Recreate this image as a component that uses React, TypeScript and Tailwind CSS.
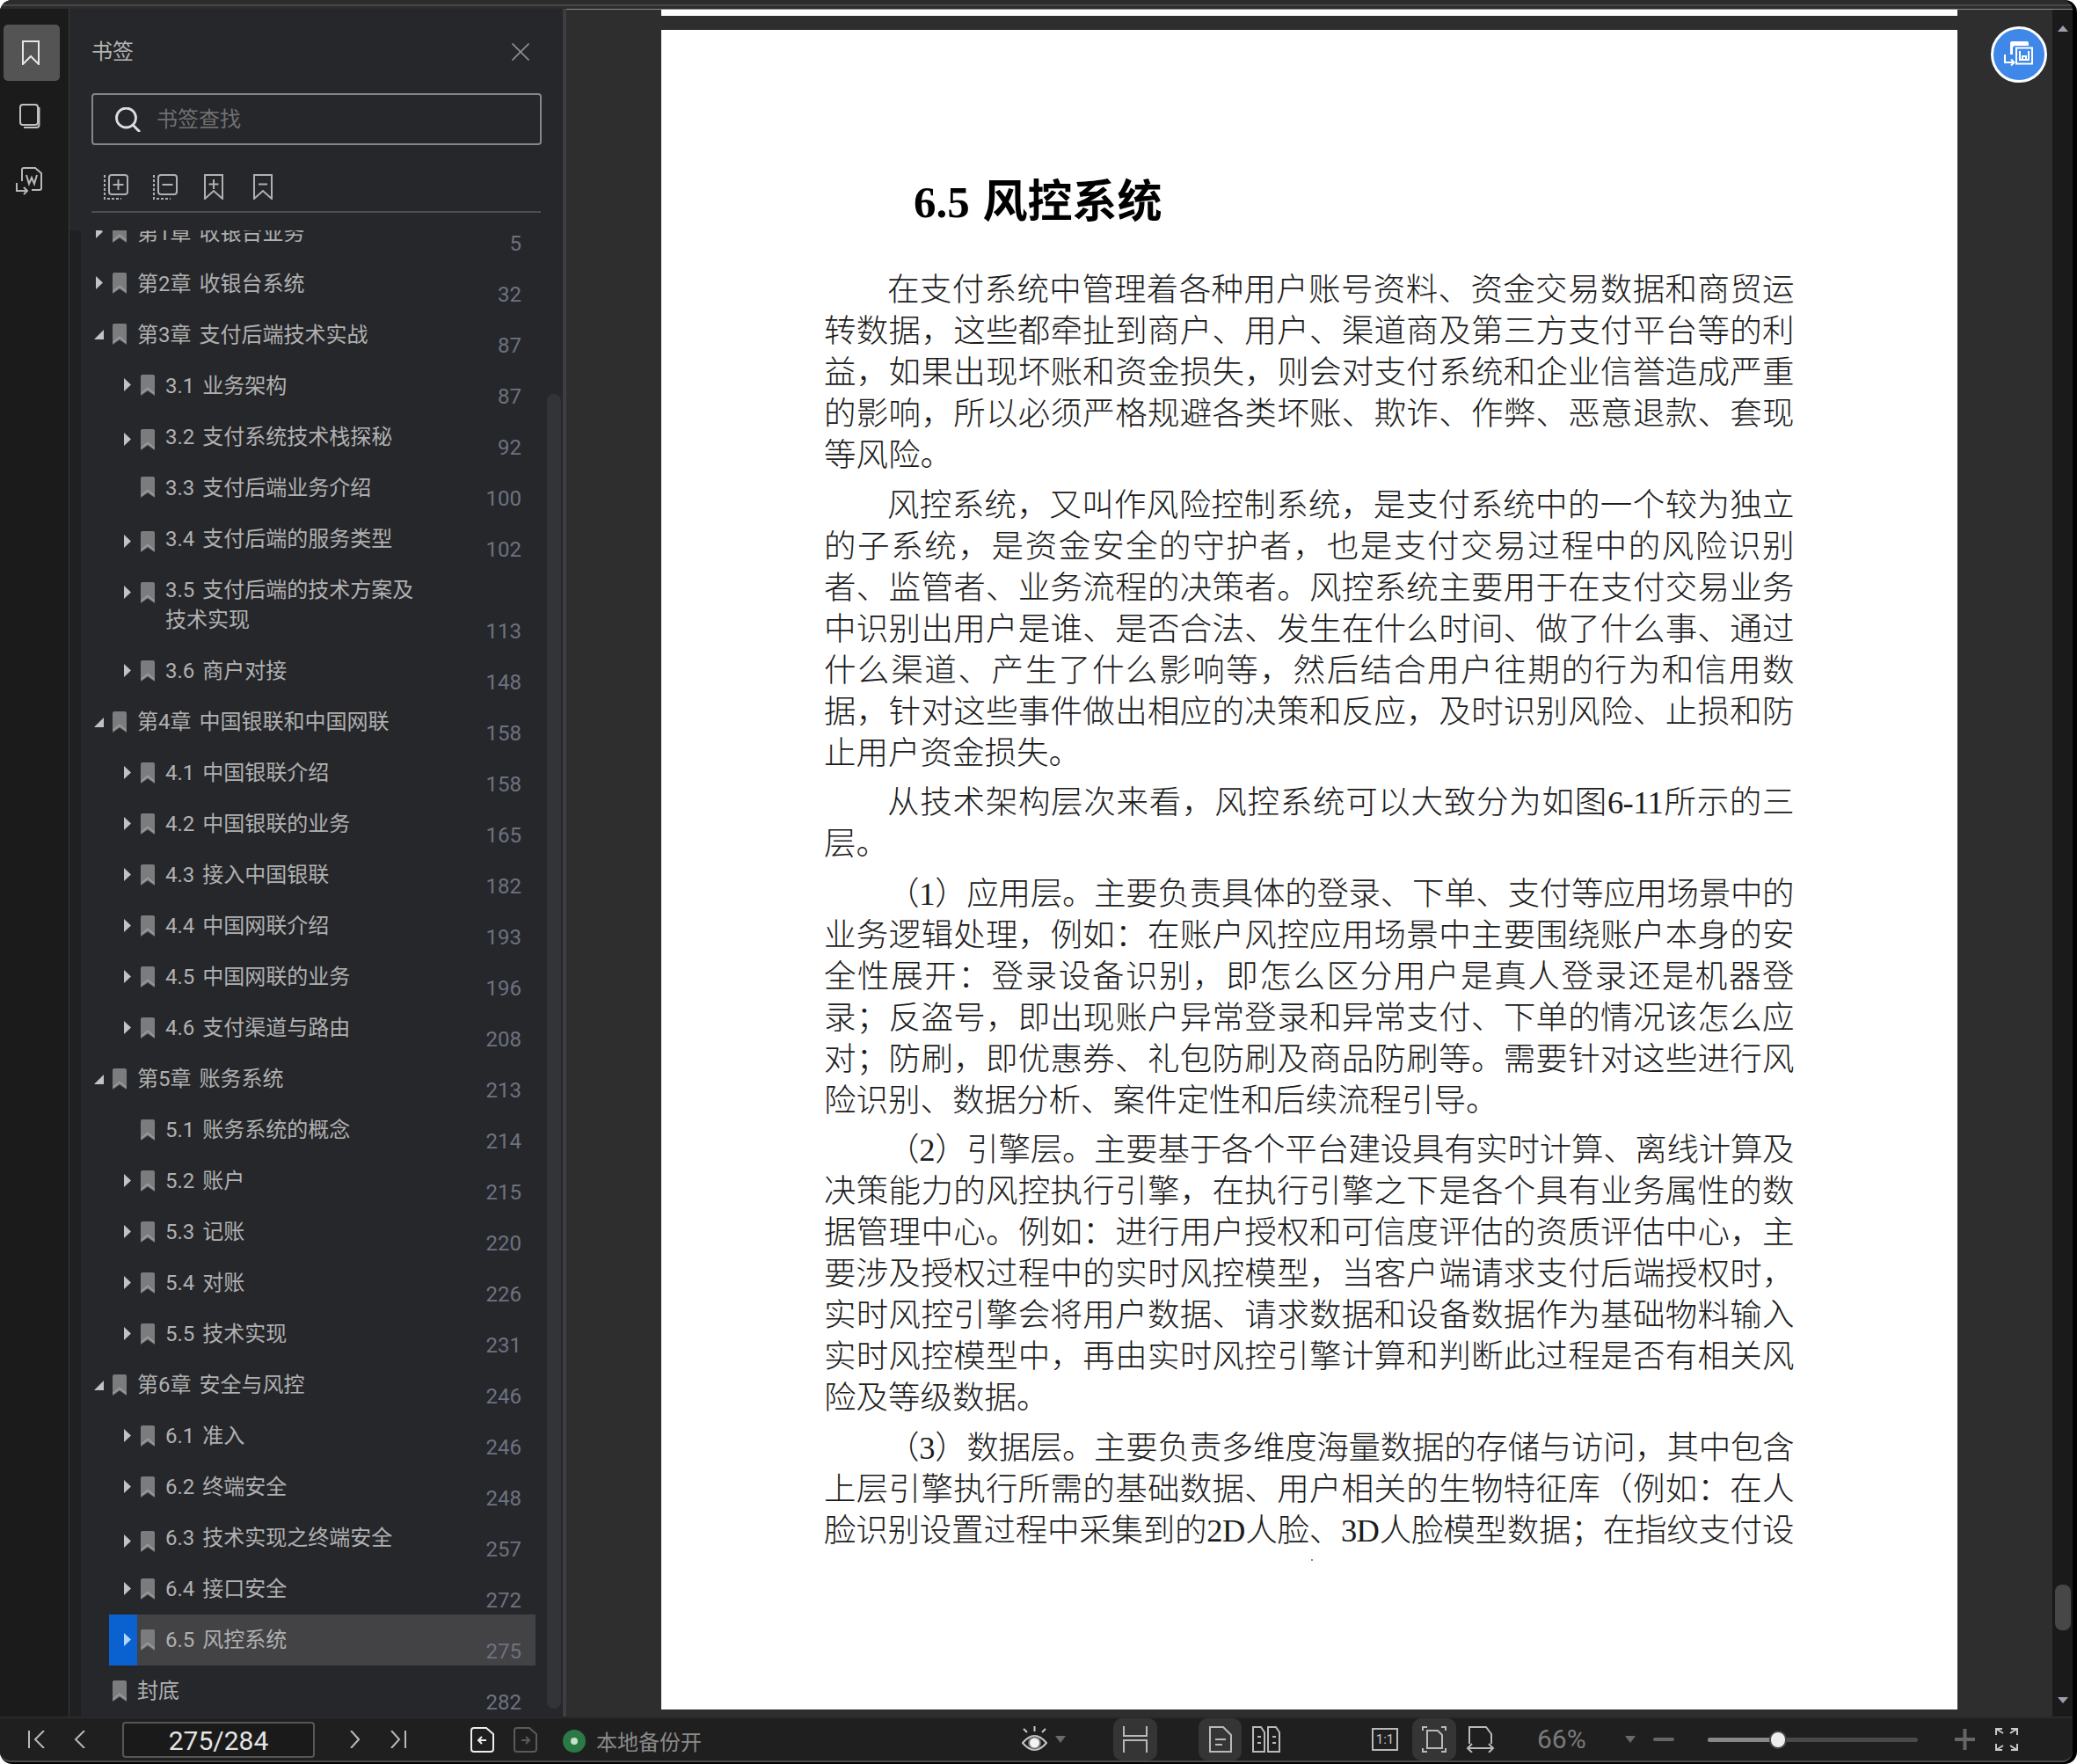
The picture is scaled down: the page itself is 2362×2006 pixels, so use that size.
import React from 'react';

type Row = { lines: string[]; page: number; level: 0 | 1; arrow: 'right' | 'down' | 'none'; selected?: boolean; low?: boolean };

const rows: Row[] = [
  { lines: ['第1章 收银台业务'], page: 5, level: 0, arrow: 'right' },
  { lines: ['第2章 收银台系统'], page: 32, level: 0, arrow: 'right' },
  { lines: ['第3章 支付后端技术实战'], page: 87, level: 0, arrow: 'down' },
  { lines: ['3.1 业务架构'], page: 87, level: 1, arrow: 'right' },
  { lines: ['3.2 支付系统技术栈探秘'], page: 92, level: 1, arrow: 'right', low: true },
  { lines: ['3.3 支付后端业务介绍'], page: 100, level: 1, arrow: 'none' },
  { lines: ['3.4 支付后端的服务类型'], page: 102, level: 1, arrow: 'right', low: true },
  { lines: ['3.5 支付后端的技术方案及', '技术实现'], page: 113, level: 1, arrow: 'right', low: true },
  { lines: ['3.6 商户对接'], page: 148, level: 1, arrow: 'right' },
  { lines: ['第4章 中国银联和中国网联'], page: 158, level: 0, arrow: 'down' },
  { lines: ['4.1 中国银联介绍'], page: 158, level: 1, arrow: 'right' },
  { lines: ['4.2 中国银联的业务'], page: 165, level: 1, arrow: 'right' },
  { lines: ['4.3 接入中国银联'], page: 182, level: 1, arrow: 'right' },
  { lines: ['4.4 中国网联介绍'], page: 193, level: 1, arrow: 'right' },
  { lines: ['4.5 中国网联的业务'], page: 196, level: 1, arrow: 'right' },
  { lines: ['4.6 支付渠道与路由'], page: 208, level: 1, arrow: 'right' },
  { lines: ['第5章 账务系统'], page: 213, level: 0, arrow: 'down' },
  { lines: ['5.1 账务系统的概念'], page: 214, level: 1, arrow: 'none' },
  { lines: ['5.2 账户'], page: 215, level: 1, arrow: 'right' },
  { lines: ['5.3 记账'], page: 220, level: 1, arrow: 'right' },
  { lines: ['5.4 对账'], page: 226, level: 1, arrow: 'right' },
  { lines: ['5.5 技术实现'], page: 231, level: 1, arrow: 'right' },
  { lines: ['第6章 安全与风控'], page: 246, level: 0, arrow: 'down' },
  { lines: ['6.1 准入'], page: 246, level: 1, arrow: 'right' },
  { lines: ['6.2 终端安全'], page: 248, level: 1, arrow: 'right' },
  { lines: ['6.3 技术实现之终端安全'], page: 257, level: 1, arrow: 'right', low: true },
  { lines: ['6.4 接口安全'], page: 272, level: 1, arrow: 'right' },
  { lines: ['6.5 风控系统'], page: 275, level: 1, arrow: 'right', selected: true },
  { lines: ['封底'], page: 282, level: 0, arrow: 'none' },
];

const paragraphs: string[][] = [
  [
    '在支付系统中管理着各种用户账号资料、资金交易数据和商贸运',
    '转数据，这些都牵扯到商户、用户、渠道商及第三方支付平台等的利',
    '益，如果出现坏账和资金损失，则会对支付系统和企业信誉造成严重',
    '的影响，所以必须严格规避各类坏账、欺诈、作弊、恶意退款、套现',
    '等风险。',
  ],
  [
    '风控系统，又叫作风险控制系统，是支付系统中的一个较为独立',
    '的子系统，是资金安全的守护者，也是支付交易过程中的风险识别',
    '者、监管者、业务流程的决策者。风控系统主要用于在支付交易业务',
    '中识别出用户是谁、是否合法、发生在什么时间、做了什么事、通过',
    '什么渠道、产生了什么影响等，然后结合用户往期的行为和信用数',
    '据，针对这些事件做出相应的决策和反应，及时识别风险、止损和防',
    '止用户资金损失。',
  ],
  ['从技术架构层次来看，风控系统可以大致分为如图6-11所示的三', '层。'],
  [
    '（1）应用层。主要负责具体的登录、下单、支付等应用场景中的',
    '业务逻辑处理，例如：在账户风控应用场景中主要围绕账户本身的安',
    '全性展开：登录设备识别，即怎么区分用户是真人登录还是机器登',
    '录；反盗号，即出现账户异常登录和异常支付、下单的情况该怎么应',
    '对；防刷，即优惠券、礼包防刷及商品防刷等。需要针对这些进行风',
    '险识别、数据分析、案件定性和后续流程引导。',
  ],
  [
    '（2）引擎层。主要基于各个平台建设具有实时计算、离线计算及',
    '决策能力的风控执行引擎，在执行引擎之下是各个具有业务属性的数',
    '据管理中心。例如：进行用户授权和可信度评估的资质评估中心，主',
    '要涉及授权过程中的实时风控模型，当客户端请求支付后端授权时，',
    '实时风控引擎会将用户数据、请求数据和设备数据作为基础物料输入',
    '实时风控模型中，再由实时风控引擎计算和判断此过程是否有相关风',
    '险及等级数据。',
  ],
  [
    '（3）数据层。主要负责多维度海量数据的存储与访问，其中包含',
    '上层引擎执行所需的基础数据、用户相关的生物特征库（例如：在人',
    '脸识别设置过程中采集到的2D人脸、3D人脸模型数据；在指纹支付设',
  ],
];

const Ic = ({ w, h, vb, children, className }: { w: string; h: string; vb: string; children: React.ReactNode; className?: string }) => (
  <svg viewBox={vb} fill="none" stroke="currentColor" className={`${w} ${h} shrink-0 ${className ?? ''}`}>
    {children}
  </svg>
);

const ListBookmark = ({ low }: { low?: boolean }) => (
  <svg viewBox="0 0 16 24" className={`ml-[4px] h-[24px] w-[16px] shrink-0 ${low ? 'mt-[21px]' : 'mt-[17px]'}`}>
    <path d="M0 2q0-2 2-2h12q2 0 2 2v22l-8-5.5-8 5.5z" fill="#7b7c7e" />
    <path d="M0.5 21.5l7.5-6 7.5 6" fill="none" stroke="#a0a0a0" strokeWidth="1.4" />
  </svg>
);

const RowArrow = ({ kind, selected }: { kind: Row['arrow']; selected?: boolean }) => {
  if (kind === 'right')
    return (
      <svg viewBox="0 0 8 15" className="h-[15px] w-[8px]">
        <path d="M0 0l8 7.5-8 7.5z" fill={selected ? '#b4d5fb' : '#c2c2c2'} />
      </svg>
    );
  if (kind === 'down')
    return (
      <svg viewBox="0 0 11 11" className="-ml-[2px] mt-[3px] h-[11px] w-[11px]">
        <path d="M0 11L11 0v11z" fill="#c2c2c2" />
      </svg>
    );
  return null;
};

const TocRow = ({ row }: { row: Row }) => (
  <div className={`flex ${row.level === 1 ? 'ml-[32px]' : ''} ${row.selected ? 'bg-[#434346]' : ''}`}>
    <div className={`w-[32px] shrink-0 pl-[17px] ${row.low ? 'pt-[25px]' : 'pt-[21px]'} ${row.selected ? 'bg-[#0a62d0]' : ''}`}>
      <RowArrow kind={row.arrow} selected={row.selected} />
    </div>
    <ListBookmark low={row.low} />
    <div className="ml-[12px] flex-1 pb-[10.75px] pt-[12.75px] text-[24px] leading-[34.5px] text-[#b0b0b0] [word-spacing:3px]">
      {row.lines.map((l) => (
        <div key={l}>{l}</div>
      ))}
    </div>
    <div className="flex items-end pb-[4px] pr-[16px] text-[24px] leading-[24px] text-[#6d7280]">{row.page}</div>
  </div>
);

const HoverBox = ({ className, children }: { className: string; children: React.ReactNode }) => (
  <div className={`flex h-[48px] items-center justify-center rounded-[10px] bg-[#353535] ${className}`}>{children}</div>
);

const Toolbar = () => (
  <div className="flex h-[50px] shrink-0 items-center border-t-2 border-[#2a2a2a] bg-[#1f1f1f] text-[#b9b9b9]">
    <Ic w="w-[19px]" h="h-[20px]" vb="0 0 19 20" className="ml-[32px]">
      <path d="M1 0v20M18 0L8 10l10 10" strokeWidth="2" />
    </Ic>
    <Ic w="w-[13px]" h="h-[20px]" vb="0 0 13 20" className="ml-[33px]">
      <path d="M12 0L2 10l10 10" strokeWidth="2" />
    </Ic>
    <div className="ml-[42px] flex h-[41px] w-[219px] items-center justify-center rounded-[4px] border-2 border-[#565656] bg-[#1a1a1a] pt-[3px] text-[30px] text-[#e4e4e4]">
      275/284
    </div>
    <Ic w="w-[11px]" h="h-[20px]" vb="0 0 11 20" className="ml-[40px]">
      <path d="M1 0l9 10-9 10" strokeWidth="2" />
    </Ic>
    <Ic w="w-[18px]" h="h-[20px]" vb="0 0 18 20" className="ml-[35px]">
      <path d="M1 0l9 10-9 10M17 0v20" strokeWidth="2" />
    </Ic>
    <Ic w="w-[27px]" h="h-[29px]" vb="0 0 27 29" className="ml-[73px] text-[#eeeeee]">
      <path d="M4 1h14l8 7v17q0 3-3 3H4q-3 0-3-3V4q0-3 3-3z" strokeWidth="2" />
      <path d="M18 15H9m4-4l-4 4 4 4" strokeWidth="2" />
    </Ic>
    <Ic w="w-[27px]" h="h-[29px]" vb="0 0 27 29" className="ml-[22px] text-[#5a5a5a]">
      <path d="M4 1h14l8 7v17q0 3-3 3H4q-3 0-3-3V4q0-3 3-3z" strokeWidth="2" />
      <path d="M9 15h9m-4-4l4 4-4 4" strokeWidth="2" />
    </Ic>
    <div className="ml-[29px] mt-[3px] flex h-[26px] w-[26px] items-center justify-center rounded-full bg-[#2b7a45]">
      <div className="h-[8px] w-[8px] rounded-full bg-[#c3e0ca]" />
    </div>
    <div className="ml-[12px] mt-[8px] w-[118px] whitespace-nowrap text-[24px] leading-[30px] text-[#8a8a8a]">本地备份开</div>
    <Ic w="w-[29px]" h="h-[30px]" vb="0 0 29 30" className="ml-[366px] text-[#c8c8c8]">
      <path d="M14.5 0v6M2 3l4 4M27 3l-4 4" strokeWidth="2" />
      <path d="M1 19q13.5-16 27 0q-13.5 16-27 0z" strokeWidth="2" />
      <circle cx="14.5" cy="19" r="6.5" fill="#f2f2f2" stroke="#777777" strokeWidth="2" />
    </Ic>
    <svg viewBox="0 0 12 8" className="ml-[9px] h-[8px] w-[12px] shrink-0">
      <path d="M0 0h12L6 8z" fill="#6a6a6a" />
    </svg>
    <HoverBox className="ml-[54px] w-[50px]">
      <Ic w="w-[28px]" h="h-[30px]" vb="0 0 28 30">
        <path d="M1 0v11h26V0M1 30V16h26v14" strokeWidth="2" />
      </Ic>
    </HoverBox>
    <HoverBox className="ml-[47px] w-[49px]">
      <Ic w="w-[26px]" h="h-[30px]" vb="0 0 26 30">
        <path d="M1 1h15l9 9v19H1z" strokeWidth="2" />
        <path d="M7 15h12M7 21h8" strokeWidth="2" />
      </Ic>
    </HoverBox>
    <Ic w="w-[32px]" h="h-[30px]" vb="0 0 32 30" className="ml-[12px]">
      <path d="M1 1h9l4 6v22H1zM18 1h9l4 6v22H18z" strokeWidth="2" />
      <path d="M6 12h4M6 19h4M23 12h4M23 19h4" strokeWidth="2" />
    </Ic>
    <div className="ml-[104px] flex h-[26px] w-[30px] shrink-0 items-center justify-center border-2 border-[#b9b9b9] text-[15px] leading-none text-[#c8c8c8]">1:1</div>
    <HoverBox className="ml-[16px] w-[50px]">
      <Ic w="w-[28px]" h="h-[30px]" vb="0 0 28 30">
        <path d="M6 5h12l5 5v15H6z" strokeWidth="2" />
        <path d="M1 5V1h5M27 5V1h-5M1 25v4h5M27 25v4h-5" strokeWidth="2" />
      </Ic>
    </HoverBox>
    <Ic w="w-[33px]" h="h-[30px]" vb="0 0 33 30" className="ml-[11px]">
      <path d="M4 20V1h19l6 8v11" strokeWidth="2" />
      <path d="M2 25h29M7 20l-5 5 5 5M26 20l5 5-5 5" strokeWidth="2" />
    </Ic>
    <div className="ml-[48px] w-[56px] text-[30px] leading-[30px] text-[#7b7b7b]">66%</div>
    <svg viewBox="0 0 12 8" className="ml-[44px] h-[8px] w-[12px] shrink-0">
      <path d="M0 0h12L6 8z" fill="#6a6a6a" />
    </svg>
    <div className="ml-[20px] h-[4px] w-[24px] rounded-full bg-[#666666]" />
    <div className="relative ml-[38px] h-[5px] w-[239px] rounded-full bg-[#4a4a4a]">
      <div className="h-full w-[80px] rounded-full bg-[#888888]" />
      <div className="absolute left-[70px] top-[-8px] h-[21px] w-[20px] rounded-full border-2 border-[#444444] bg-[#eeeeee]" />
    </div>
    <Ic w="w-[23px]" h="h-[24px]" vb="0 0 23 24" className="ml-[42px] text-[#666666]">
      <path d="M0 12h23M11.5 0v24" strokeWidth="4" />
    </Ic>
    <Ic w="w-[28px]" h="h-[28px]" vb="0 0 28 28" className="ml-[22px] text-[#c8c8c8]">
      <path d="M10 7L2 2m0 7V2h7M18 7l8-5m0 7V2h-7M10 21l-8 5m0-7v7h7M18 21l8 5m0-7v7h-7" strokeWidth="2" />
    </Ic>
  </div>
);

const Sidebar = () => (
  <div className="relative flex w-[565px] shrink-0 flex-col border-r-[4px] border-[#3e3e40] bg-[#26272b]">
    <div className="mx-[25px] mt-[28px] flex h-[40px] w-[511px] items-center justify-between pt-[1px]">
      <span className="text-[24px] text-[#b4b4b4]">书签</span>
      <Ic w="w-[20px]" h="h-[20px]" vb="0 0 20 20" className="mr-[13px] text-[#8a8a8a]">
        <path d="M0.5 0.5l19 19M19.5 0.5l-19 19" strokeWidth="1.8" />
      </Ic>
    </div>
    <div className="ml-[25px] mt-[28px] flex h-[59px] w-[512px] items-center rounded-[4px] border-2 border-[#85868a] pl-[25px] pt-[1px]">
      <Ic w="w-[30px]" h="h-[28px]" vb="0 0 30 28" className="text-[#dddddd]">
        <circle cx="12.5" cy="12" r="11" strokeWidth="2.8" />
        <path d="M20 20l8 8" strokeWidth="3" />
      </Ic>
      <span className="ml-[17px] text-[24px] text-[#707070]">书签查找</span>
    </div>
    <div className="mx-[25px] mt-[33px] flex h-[29px] items-start pl-[14px] text-[#b0b0b0]">
      <Ic w="w-[28px]" h="h-[29px]" vb="0 0 28 29">
        <rect x="6" y="1" width="21" height="22" rx="3" strokeWidth="2" />
        <path d="M16.5 6v12M10.5 12h12" strokeWidth="2" />
        <path d="M1 1v27h19" strokeWidth="2" strokeDasharray="3 2" />
      </Ic>
      <Ic w="w-[28px]" h="h-[29px]" vb="0 0 28 29" className="ml-[28px]">
        <rect x="6" y="1" width="21" height="22" rx="3" strokeWidth="2" />
        <path d="M10.5 12h12" strokeWidth="2" />
        <path d="M1 1v27h19" strokeWidth="2" strokeDasharray="3 2" />
      </Ic>
      <Ic w="w-[22px]" h="h-[29px]" vb="0 0 22 29" className="ml-[30px]">
        <path d="M1 1h20v27l-10-9-10 9z" strokeWidth="2" />
        <path d="M11 6v11M5.5 11.5h11" strokeWidth="2" />
      </Ic>
      <Ic w="w-[22px]" h="h-[29px]" vb="0 0 22 29" className="ml-[34px]">
        <path d="M1 1h20v27l-10-9-10 9z" strokeWidth="2" />
        <path d="M6 11.5h10" strokeWidth="2" />
      </Ic>
    </div>
    <div className="mx-[25px] mt-[13px] h-[2px] w-[511px] bg-[#4c4d50]" />
    <div className="mt-[20px] flex min-h-0 flex-1">
      <div className="w-[13px] shrink-0 bg-[#1f2022]" />
      <div className="mr-[31px] min-h-0 flex-1 overflow-hidden">
        <div className="-mt-[27px]">
          {rows.map((r) => (
            <TocRow key={r.lines[0]} row={r} />
          ))}
        </div>
      </div>
    </div>
    <div className="absolute left-[543px] top-[438px] h-[1495px] w-[16px] rounded-full bg-[#333438]" />
  </div>
);

const Page = () => (
  <div className="h-[1910px] w-[1474px] shrink-0 overflow-hidden bg-white pl-[185px] pr-[186px] pt-[166px] text-[#1c1c1c] [font-family:'Liberation_Serif','Noto_Sans_CJK_SC',serif]">
    <div className="ml-[102px] h-[60px] whitespace-nowrap text-[51px] font-bold leading-[60px] text-black [word-spacing:2px]">6.5 风控系统</div>
    <div className="mt-[46px] text-[36.5px] font-light">
      {paragraphs.map((p) => (
        <div key={p[0]} className="mb-[9.5px]">
          {p.map((line, i) => (
            <div
              key={line}
              className={`h-[47px] leading-[47px] ${i === 0 ? 'pl-[72px]' : ''} ${i < p.length - 1 || p === paragraphs[paragraphs.length - 1] ? 'tracking-[-0.6px] text-justify [text-align-last:justify]' : ''}`}
            >
              {line}
            </div>
          ))}
        </div>
      ))}
    </div>
    <div className="ml-[554px] h-[2px] w-[2px] bg-[#888888]" />
  </div>
);

const App: React.FC = () => {
  return (
    <div className="h-[2006px] w-[2362px] overflow-hidden bg-white [font-family:Roboto,'Noto_Sans_CJK_SC',sans-serif]">
      <div className="h-full w-full overflow-hidden rounded-[14px] bg-black pb-[2px] pr-[5px]">
        <div className="flex h-full flex-col overflow-hidden rounded-[12px] border-b-2 border-[#4a4a4a] bg-[#2e2e2e]">
          <div className="h-[10px] shrink-0 bg-[#2c2c2c] pt-[5px]">
            <div className="h-[2px] bg-[#464646]" />
          </div>
          <div className="flex min-h-0 flex-1">
            <div className="flex w-[79px] shrink-0 flex-col border-r border-[#3a3a3a] bg-[#1b1b1b] pt-[18px]">
              <div className="ml-[4px] flex h-[64px] w-[64px] items-center justify-center rounded-[5px] bg-[#545454] text-[#e6e6e6]">
                <Ic w="w-[20px]" h="h-[28px]" vb="0 0 20 28" className="-ml-[2px]">
                  <path d="M1 1h18v26l-9-9-9 9z" strokeWidth="2" />
                </Ic>
              </div>
              <Ic w="w-[24px]" h="h-[28px]" vb="0 0 24 28" className="ml-[22px] mt-[26px] text-[#c0c0c0]">
                <rect x="1" y="1" width="20" height="23" rx="3" strokeWidth="2" />
                <path d="M22.5 4v20q0 3-3 3H5" strokeWidth="2" />
              </Ic>
              <Ic w="w-[30px]" h="h-[32px]" vb="0 0 30 32" className="ml-[18px] mt-[44px] text-[#b8b8b8]">
                <path d="M7 16V3q0-2 2-2h13l7 6v17q0 2-2 2h-9" strokeWidth="2" />
                <path d="M12 9l3 10 3-7 3 7 3-10" strokeWidth="2" />
                <path d="M1 18v9h12m-4-4l4 4-4 4" strokeWidth="2" />
              </Ic>
            </div>
            <Sidebar />
            <div className="relative flex min-w-0 flex-1">
              <div className="flex min-w-0 flex-1 flex-col items-center border-t border-[#8a8a8a] bg-[#2e2e2e]">
                <div className="h-[7px] w-[1474px] shrink-0 bg-white" />
                <div className="h-[16px] shrink-0" />
                <Page />
              </div>
              <div className="flex w-[23px] shrink-0 flex-col items-center border-t border-[#8a8a8a] bg-[#1a1a1a]">
                <svg viewBox="0 0 12 7" className="mt-[18px] h-[7px] w-[12px]">
                  <path d="M6 0l6 7H0z" fill="#9a9fae" />
                </svg>
                <div className="mt-[1766px] h-[52px] w-[18px] rounded-[8px] bg-[#474747]" />
                <svg viewBox="0 0 12 7" className="mt-[76px] h-[7px] w-[12px]">
                  <path d="M0 0h12L6 7z" fill="#9a9fae" />
                </svg>
              </div>
              <div className="absolute left-[1620px] top-[20px] flex h-[64px] w-[64px] items-center justify-center rounded-full border-[3px] border-white bg-[#3f88ea]">
                <svg viewBox="0 0 34 30" className="h-[30px] w-[34px]">
                  <path d="M7 2q0-2 2-2h17q2 0 2 2v3H13q-3 0-3 3v7H7z" fill="#ffffff" />
                  <rect x="14" y="7.5" width="18" height="18" fill="none" stroke="#ffffff" strokeWidth="2" />
                  <path d="M18 11v10h10V11M21 21v-4h4v4" fill="none" stroke="#ffffff" strokeWidth="2" />
                  <path d="M1 15v9h10m-3-3.5l3.5 3.5L8 27.5" fill="none" stroke="#ffffff" strokeWidth="2" />
                </svg>
              </div>
            </div>
          </div>
          <Toolbar />
        </div>
      </div>
    </div>
  );
};

export default App;
